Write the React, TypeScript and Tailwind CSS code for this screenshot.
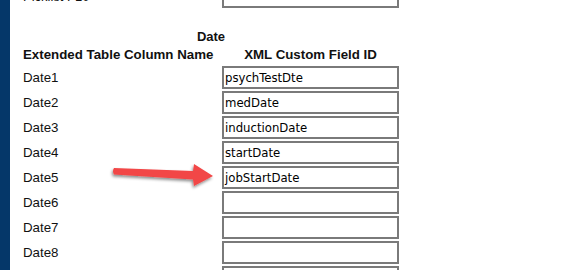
import React from "react";

const rows: { label: string; value: string }[] = [
  { label: "Date1", value: "psychTestDte" },
  { label: "Date2", value: "medDate" },
  { label: "Date3", value: "inductionDate" },
  { label: "Date4", value: "startDate" },
  { label: "Date5", value: "jobStartDate" },
  { label: "Date6", value: "" },
  { label: "Date7", value: "" },
  { label: "Date8", value: "" },
  { label: "", value: "" },
];

function Box({ value }: { value: string }) {
  return (
    <div
      className="w-[177px] h-[23px] border-2 border-[#7a7a7a] bg-white pl-[1px] flex items-center text-[13px] text-black overflow-hidden whitespace-nowrap"
      style={{ fontFamily: '"DejaVu Sans Condensed", "DejaVu Sans", sans-serif' }}
    >
      {value}
    </div>
  );
}

export default function App() {
  return (
    <div className="relative w-[582px] h-[270px] overflow-hidden bg-white flex">
      <div className="w-[10px] h-full bg-[#053769] shrink-0" />
      <div
        className="pl-[13px] mt-[-15px] flex flex-col text-[13px] text-[#111]"
        style={{ fontFamily: '"Liberation Sans", Arial, sans-serif' }}
      >
        <div className="flex items-center h-[23px]">
          <div className="w-[199px]">Picklist F10</div>
          <Box value="" />
        </div>
        <div className="mt-[21px] h-[15px] leading-[15px] font-bold text-center w-[376px]">
          Date
        </div>
        <div className="mt-[3px] h-[15px] leading-[15px] font-bold flex text-[13.3px]">
          <div className="w-[199px]">Extended Table Column Name</div>
          <div className="w-[177px] text-center">XML Custom Field ID</div>
        </div>
        <div className="mt-[4px] flex flex-col gap-[2px]">
          {rows.map((r, i) => (
            <div key={i} className="flex items-center h-[23px]">
              <div className="w-[199px] text-[13.3px]">{r.label}</div>
              <Box value={r.value} />
            </div>
          ))}
        </div>
      </div>
      <svg
        className="absolute left-0 top-0 pointer-events-none"
        width="582"
        height="270"
        viewBox="0 0 582 270"
      >
        <defs>
          <filter id="sh" x="-20%" y="-50%" width="140%" height="200%">
            <feDropShadow dx="-1" dy="2" stdDeviation="1.6" floodColor="#000" floodOpacity="0.45" />
          </filter>
        </defs>
        <path
          d="M114 168 L193 171 L194 164 L213 176 L194 186 L193 179.5 L114 174.5 Q112 171.2 114 168 Z"
          fill="#f24646"
          filter="url(#sh)"
        />
      </svg>
    </div>
  );
}
